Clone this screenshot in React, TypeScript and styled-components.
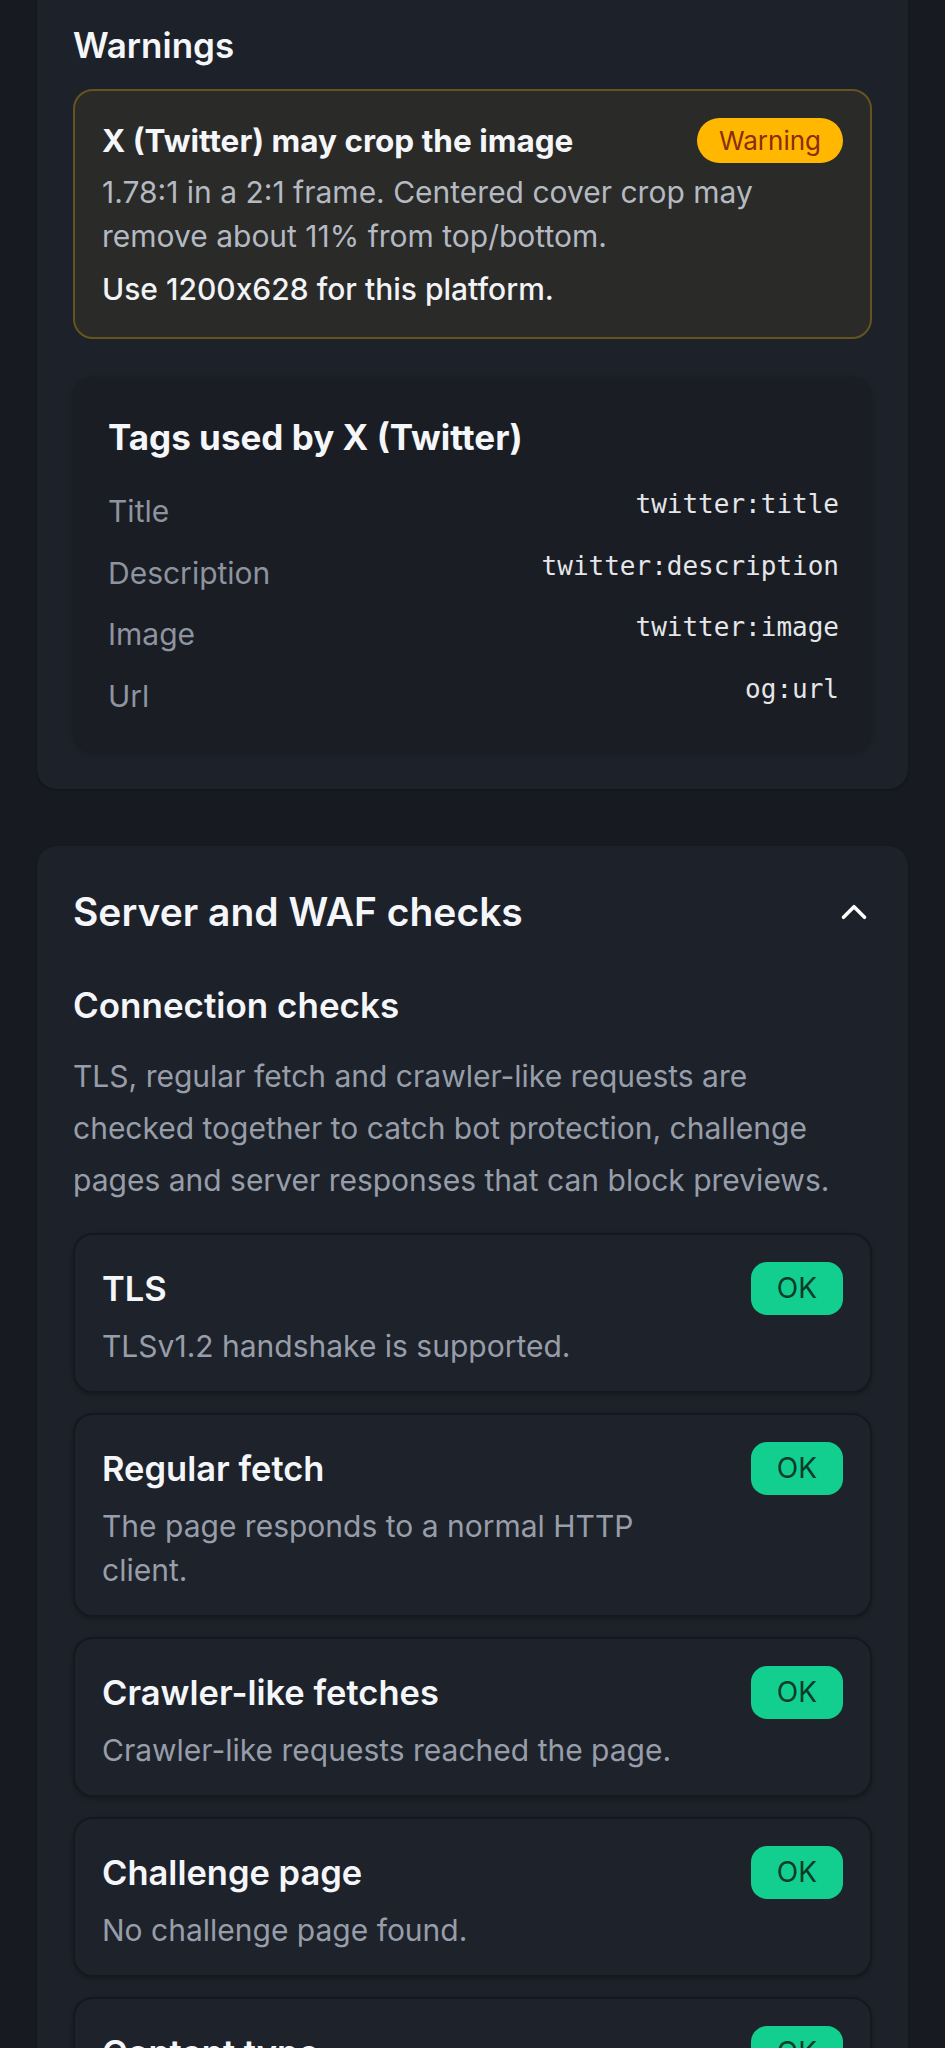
import React from 'react';
import styled, { createGlobalStyle, css } from 'styled-components';

type Tone = 'ok' | 'warn';

interface CheckItem {
  title: string;
  text: string;
  status: string;
}

interface TagItem {
  label: string;
  value: string;
}

const GlobalStyle = createGlobalStyle`
  body {
    margin: 0;
    background: #171a20;
    font-family: Inter, "Noto Sans", "Liberation Sans", sans-serif;
    -webkit-font-smoothing: antialiased;
  }
  * {
    box-sizing: border-box;
  }
`;

const Page = styled.main`
  display: flex;
  flex-direction: column;
  gap: 57px;
  padding: 0 37px 40px;
`;

const Card = styled.section<{ $first?: boolean }>`
  background: #1d2129;
  border-radius: 20px;
  box-shadow: 0 1px 3px rgba(0, 0, 0, 0.25);
  ${(props) => (props.$first
    ? css`
      margin-top: -30px;
      padding: 53px 36px 38px;
    `
    : css`
      padding: 41px 36px 36px;
    `)}
`;

const BlockTitle = styled.h2`
  margin: 0;
  color: #f4f6f9;
  font-size: 35px;
  font-weight: 600;
  line-height: 1.3;
`;

const Alert = styled.div`
  margin-top: 20px;
  border: 2px solid #65541d;
  background: #2a2a28;
  border-radius: 20px;
  padding: 26px 27px;
`;

const AlertHead = styled.div`
  display: flex;
  align-items: center;
  justify-content: space-between;
  gap: 20px;
  min-height: 47px;
`;

const AlertTitle = styled.div`
  color: #f4f6f9;
  font-size: 31.5px;
  font-weight: 700;
  line-height: 47px;
`;

const AlertText = styled.p`
  margin: 6px 0 0;
  color: #b4b9c2;
  font-size: 30px;
  line-height: 44px;
`;

const AlertHint = styled.p`
  margin: 9px 0 0;
  color: #f1f3f6;
  font-size: 30px;
  font-weight: 500;
  line-height: 44px;
  font-feature-settings: "calt" 0;
`;

const Badge = styled.span<{ $tone: Tone }>`
  flex-shrink: 0;
  display: inline-flex;
  align-items: center;
  justify-content: center;
  font-weight: 400;
  ${(props) => (props.$tone === 'warn'
    ? css`
      height: 45px;
      padding: 0 22px;
      border-radius: 999px;
      background: #ffb700;
      color: #8a2d0c;
      font-size: 26px;
    `
    : css`
      height: 53px;
      padding: 0 26px;
      border-radius: 16px;
      background: #12cf8f;
      color: #0a3b2a;
      font-size: 28px;
    `)}
`;

const TagsPanel = styled.div`
  margin-top: 38px;
  background: #1a1d23;
  border-radius: 20px;
  padding: 38px 33px 32px 35px;
  box-shadow: 0 2px 6px rgba(0, 0, 0, 0.2);
`;

const TagsTitle = styled.h3`
  margin: 0 0 29px;
  color: #f4f6f9;
  font-size: 35px;
  font-weight: 700;
  line-height: 1.3;
`;

const TagList = styled.div`
  display: flex;
  flex-direction: column;
  gap: 16.5px;
`;

const TagRow = styled.div`
  display: flex;
  align-items: flex-start;
  justify-content: space-between;
`;

const TagLabel = styled.span`
  color: #8d94a0;
  font-size: 30px;
  line-height: 45px;
`;

const TagValue = styled.code`
  color: #e4e6ea;
  font-family: "DejaVu Sans Mono", "Liberation Mono", monospace;
  font-size: 26px;
  line-height: 31px;
`;

const SectionHead = styled.div`
  display: flex;
  align-items: center;
  justify-content: space-between;
`;

const SectionTitle = styled.h2`
  margin: 0;
  color: #f4f6f9;
  font-size: 39px;
  font-weight: 600;
  line-height: 1.3;
`;

const Toggle = styled.button`
  display: flex;
  padding: 0;
  border: none;
  background: none;
  color: #ffffff;
  cursor: pointer;
`;

const SubTitle = styled.h3`
  margin: 46px 0 0;
  color: #f4f6f9;
  font-size: 35px;
  font-weight: 600;
  line-height: 1.3;
`;

const Lead = styled.p`
  margin: 21px 0 0;
  color: #979eaa;
  font-size: 30px;
  line-height: 52px;
`;

const CheckList = styled.div`
  display: flex;
  flex-direction: column;
  gap: 20px;
  margin-top: 27px;
`;

const CheckCard = styled.div`
  display: flex;
  align-items: flex-start;
  gap: 48px;
  border: 2px solid #15181e;
  background: #1e222a;
  border-radius: 20px;
  padding: 27px 27px 23px;
  box-shadow: 0 2px 4px rgba(0, 0, 0, 0.25);
`;

const CheckBody = styled.div`
  flex: 1;
  min-width: 0;
`;

const CheckTitle = styled.div`
  color: #f4f6f9;
  font-size: 34.5px;
  font-weight: 600;
  line-height: 54px;
`;

const CheckText = styled.p`
  margin: 8px 0 0;
  color: #979eaa;
  font-size: 30px;
  line-height: 44px;
`;

const tags: TagItem[] = [
  { label: 'Title', value: 'twitter:title' },
  { label: 'Description', value: 'twitter:description' },
  { label: 'Image', value: 'twitter:image' },
  { label: 'Url', value: 'og:url' },
];

const checks: CheckItem[] = [
  { title: 'TLS', text: 'TLSv1.2 handshake is supported.', status: 'OK' },
  { title: 'Regular fetch', text: 'The page responds to a normal HTTP client.', status: 'OK' },
  { title: 'Crawler-like fetches', text: 'Crawler-like requests reached the page.', status: 'OK' },
  { title: 'Challenge page', text: 'No challenge page found.', status: 'OK' },
  { title: 'Content type', text: 'The page is served as text/html.', status: 'OK' },
];

function ChevronUp() {
  return (
    <svg width="36" height="36" viewBox="0 0 24 24" fill="none" stroke="currentColor" strokeWidth={2.4} strokeLinecap="round" strokeLinejoin="round">
      <path d="M5 15.5l7-7 7 7" />
    </svg>
  );
}

function App() {
  return (
    <>
      <GlobalStyle />
      <Page>
        <Card $first>
          <BlockTitle>Warnings</BlockTitle>
          <Alert>
            <AlertHead>
              <AlertTitle>X (Twitter) may crop the image</AlertTitle>
              <Badge $tone="warn">Warning</Badge>
            </AlertHead>
            <AlertText>
              1.78:1 in a 2:1 frame. Centered cover crop may remove about 11% from top/bottom.
            </AlertText>
            <AlertHint>Use 1200x628 for this platform.</AlertHint>
          </Alert>

          <TagsPanel>
            <TagsTitle>Tags used by X (Twitter)</TagsTitle>
            <TagList>
              {tags.map((tag) => (
                <TagRow key={tag.label}>
                  <TagLabel>{tag.label}</TagLabel>
                  <TagValue>{tag.value}</TagValue>
                </TagRow>
              ))}
            </TagList>
          </TagsPanel>
        </Card>

        <Card>
          <SectionHead>
            <SectionTitle>Server and WAF checks</SectionTitle>
            <Toggle type="button" aria-label="Collapse">
              <ChevronUp />
            </Toggle>
          </SectionHead>
          <SubTitle>Connection checks</SubTitle>
          <Lead>
            TLS, regular fetch and crawler-like requests are checked together to catch bot
            protection, challenge pages and server responses that can block previews.
          </Lead>
          <CheckList>
            {checks.map((check) => (
              <CheckCard key={check.title}>
                <CheckBody>
                  <CheckTitle>{check.title}</CheckTitle>
                  <CheckText>{check.text}</CheckText>
                </CheckBody>
                <Badge $tone="ok">{check.status}</Badge>
              </CheckCard>
            ))}
          </CheckList>
        </Card>
      </Page>
    </>
  );
}

export default App;
